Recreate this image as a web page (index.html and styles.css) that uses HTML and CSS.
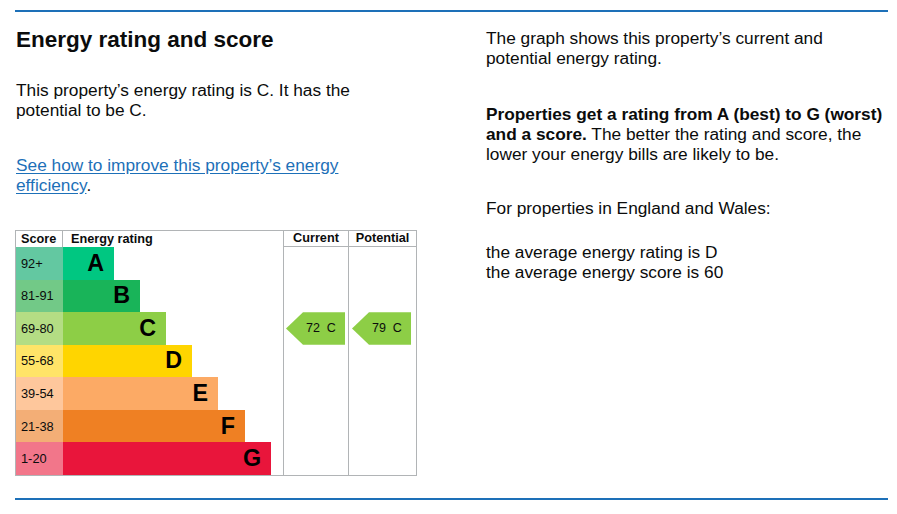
FILE: index.html
```html
<!DOCTYPE html>
<html lang="en">
<head>
<meta charset="utf-8">
<title>Energy rating and score</title>
<link rel="stylesheet" href="styles.css">
</head>
<body>
<section class="panel">
  <div class="col col-left">
    <h2 class="title">Energy rating and score</h2>
    <p class="text narrow">This property’s energy rating is C. It has the potential to be C.</p>
    <p class="text narrow link-para"><a class="link" href="#">See how to improve this property’s energy efficiency</a>.</p>

    <div class="epc">
      <div class="epc-head">
        <div class="h h-score">Score</div>
        <div class="h h-rating">Energy rating</div>
        <div class="h h-cur">Current</div>
        <div class="h h-pot">Potential</div>
      </div>
      <div class="epc-body">
        <div class="score s-a">92+</div><div class="barcell"><div class="bar b-a">A</div></div>
        <div class="score s-b">81-91</div><div class="barcell"><div class="bar b-b">B</div></div>
        <div class="score s-c">69-80</div><div class="barcell"><div class="bar b-c">C</div></div>
        <div class="score s-d">55-68</div><div class="barcell"><div class="bar b-d">D</div></div>
        <div class="score s-e">39-54</div><div class="barcell"><div class="bar b-e">E</div></div>
        <div class="score s-f">21-38</div><div class="barcell"><div class="bar b-f">F</div></div>
        <div class="score s-g">1-20</div><div class="barcell"><div class="bar b-g">G</div></div>
        <div class="vcol vcol-cur"></div>
        <div class="vcol vcol-pot"></div>
        <div class="arrow arrow-cur">72&nbsp;&nbsp;C</div>
        <div class="arrow arrow-pot">79&nbsp;&nbsp;C</div>
      </div>
    </div>
  </div>

  <div class="col col-right">
    <p class="text r1">The graph shows this property’s current and potential energy rating.</p>
    <p class="text r2"><strong>Properties get a rating from A (best) to G (worst) and a score.</strong> The better the rating and score, the lower your energy bills are likely to be.</p>
    <p class="text r3">For properties in England and Wales:</p>
    <p class="text r4">the average energy rating is D<br>the average energy score is 60</p>
  </div>
</section>
</body>
</html>
```

FILE: styles.css
```css
html, body {
  margin: 0;
  padding: 0;
  background: #ffffff;
}

body {
  font-family: "Liberation Sans", Arial, sans-serif;
  color: #0b0c0c;
}

.panel {
  margin: 10px 9px 0 15px;
  border-top: 2px solid #1d70b8;
  border-bottom: 2px solid #1d70b8;
  display: grid;
  grid-template-columns: 402px 402px;
  column-gap: 69px;
  padding-bottom: 22px;
}

.title {
  margin: 14px 0 0 1px;
  font-size: 22.5px;
  line-height: 28px;
  font-weight: 700;
}

.text {
  margin: 0;
  font-size: 17.3px;
  line-height: 20px;
}

.narrow {
  max-width: 362px;
  margin-left: 1px;
}

.col-left .text:first-of-type {
  margin-top: 26px;
}

.link-para {
  margin-top: 35px;
}

.link {
  color: #1d70b8;
  text-decoration: underline;
  text-underline-offset: 2px;
}

.r1 { margin-top: 16px; max-width: 398px; }
.r2 { margin-top: 36px; max-width: 402px; }
.r3 { margin-top: 34px; }
.r4 { margin-top: 24px; }

/* EPC chart */
.epc {
  margin-top: 35px;
  width: 400px;
  border: 1px solid #b1b4b6;
}

.epc-head,
.epc-body {
  display: grid;
  grid-template-columns: 47px 220px 65px 68px;
}

.epc-head {
  height: 16px;
}

.h {
  font-size: 12.7px;
  font-weight: 700;
  line-height: 16px;
  box-sizing: border-box;
}

.h-score {
  border-right: 1px solid #b1b4b6;
  padding-left: 5px;
}

.h-rating {
  padding-left: 8px;
}

.h-cur,
.h-pot {
  text-align: center;
  border-left: 1px solid #b1b4b6;
  border-bottom: 1px solid #b1b4b6;
  line-height: 15px;
}

.epc-body {
  grid-template-rows: repeat(7, 1fr);
  height: 228px;
}

.score {
  grid-column: 1;
  display: flex;
  align-items: center;
  padding-left: 5px;
  font-size: 12.8px;
  color: #0b0c0c;
}

.barcell {
  grid-column: 2;
  display: flex;
}

.bar {
  display: flex;
  align-items: center;
  justify-content: flex-end;
  padding-right: 10px;
  box-sizing: border-box;
  font-size: 23.3px;
  font-weight: 700;
  color: #000;
}

.vcol {
  grid-row: 1 / -1;
  border-left: 1px solid #b1b4b6;
}
.vcol-cur { grid-column: 3; }
.vcol-pot { grid-column: 4; }

.arrow {
  grid-row: 3;
  width: 59px;
  background: #8dce46;
  clip-path: polygon(0 50%, 17px 0, 100% 0, 100% 100%, 17px 100%);
  display: flex;
  align-items: center;
  padding-left: 20px;
  box-sizing: border-box;
  font-size: 12.5px;
  font-weight: 400;
  color: #0b0c0c;
}
.arrow-cur { grid-column: 3; margin-left: 3px; }
.arrow-pot { grid-column: 4; margin-left: 4px; }

.s-a { background: #63c8a1; }
.s-b { background: #72c987; }
.s-c { background: #b4dd84; }
.s-d { background: #ffe468; }
.s-e { background: #fec79c; }
.s-f { background: #f3ae76; }
.s-g { background: #f2768a; }

.b-a { background: #00c781; width: 51px; }
.b-b { background: #19b459; width: 77px; }
.b-c { background: #8dce46; width: 103px; }
.b-d { background: #ffd500; width: 129px; }
.b-e { background: #fcaa65; width: 155px; }
.b-f { background: #ef8023; width: 182px; }
.b-g { background: #e9153b; width: 208px; }
```
